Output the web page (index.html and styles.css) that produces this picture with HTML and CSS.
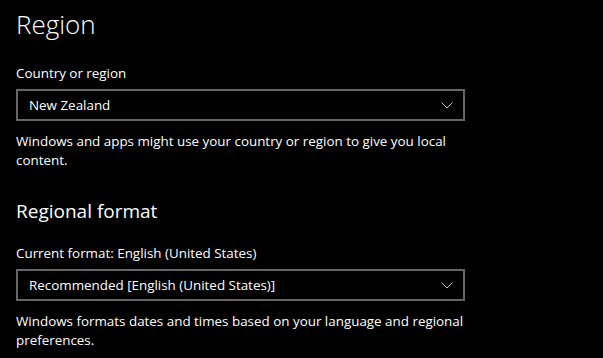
FILE: index.html
```html
<!DOCTYPE html>
<html lang="en">
<head>
    <meta charset="UTF-8">
    <meta name="viewport" content="width=device-width, initial-scale=1.0">
    <title>Region</title>
    <link rel="stylesheet" href="styles.css">
</head>
<body>

<div class="page">
    <h1>Region</h1>

    <div class="field">
        <label for="country">Country or region</label>
        <div class="select-box" id="country">
            <span>New Zealand</span>
            <svg class="chevron" width="12" height="7" viewBox="0 0 12 7"><path d="M0.5 0.5 L6 6 L11.5 0.5" fill="none" stroke="#c8c8c8" stroke-width="1"/></svg>
        </div>
        <p class="note">Windows and apps might use your country or region to give you local content.</p>
    </div>

    <h2>Regional format</h2>

    <div class="field">
        <label for="format">Current format: English (United States)</label>
        <div class="select-box" id="format">
            <span>Recommended [English (United States)]</span>
            <svg class="chevron" width="12" height="7" viewBox="0 0 12 7"><path d="M0.5 0.5 L6 6 L11.5 0.5" fill="none" stroke="#c8c8c8" stroke-width="1"/></svg>
        </div>
        <p class="note">Windows formats dates and times based on your language and regional preferences.</p>
    </div>
</div>

</body>
</html>
```

FILE: styles.css
```css
body {
    margin: 0;
    background-color: #000;
    color: #fff;
    font-family: "Open Sans", "Noto Sans", sans-serif;
    font-size: 13.4px;
}

.page {
    padding: 4px 16px 0 16px;
    width: 449px;
}

h1 {
    font-size: 26px;
    font-weight: 300;
    margin: 0 0 20px 0;
    line-height: 40px;
}

h2 {
    font-size: 19px;
    font-weight: 400;
    margin: 28px 0 20px 0;
    line-height: 26px;
}

.field label {
    display: block;
    line-height: 18px;
    margin-bottom: 7px;
}

.select-box {
    height: 28px;
    border: 2px solid #666;
    display: flex;
    align-items: center;
    justify-content: space-between;
    padding: 0 10px 0 11px;
}

.note {
    margin: 11px 0 0 0;
    line-height: 19px;
}
```
